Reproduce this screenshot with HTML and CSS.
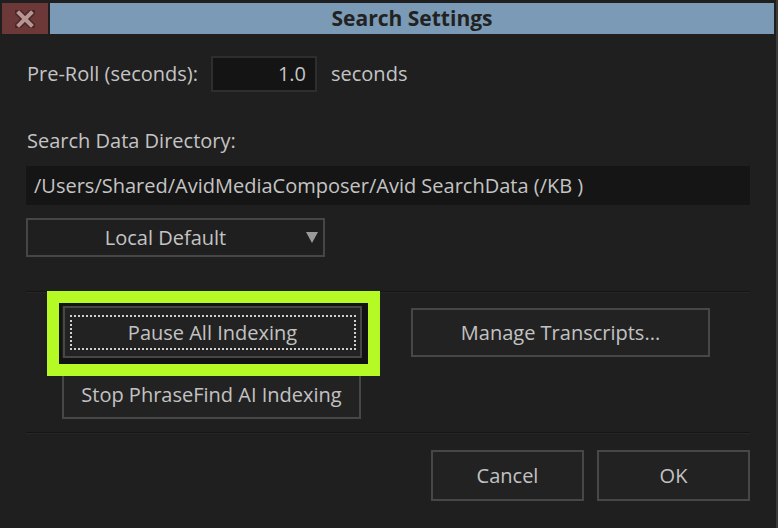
FILE: index.html
```html
<!DOCTYPE html>
<html lang="en">
<head>
  <meta charset="UTF-8">
  <title>Search Settings</title>
  <link rel="stylesheet" href="styles.css">
</head>
<body>
  <div class="dialog">
    <!-- Title bar -->
    <div class="titlebar">
      <div class="close-btn">
        <svg width="20" height="18" viewBox="0 0 20 18">
          <path d="M3 2 L17 16 M17 2 L3 16" stroke="#4a2626" stroke-width="7" stroke-linecap="square"/>
          <path d="M4 3 L16 15 M16 3 L4 15" stroke="#b79595" stroke-width="4" stroke-linecap="square"/>
        </svg>
      </div>
      <div class="title">Search Settings</div>
    </div>

    <div class="content">
      <div class="row preroll">
        <label class="label">Pre-Roll (seconds):</label>
        <div class="num-field">1.0</div>
        <span class="label unit">seconds</span>
      </div>

      <div class="label dir-label">Search Data Directory:</div>
      <div class="path-field">/Users/Shared/AvidMediaComposer/Avid SearchData (/KB )</div>
      <div class="dropdown">
        <span>Local Default</span>
        <span class="arrow"></span>
      </div>

      <div class="separator"></div>

      <div class="actions">
        <div class="col">
          <div class="focus-wrap">
            <button class="btn focused"><span class="focus-dots">Pause All Indexing</span></button>
          </div>
          <button class="btn stop">Stop PhraseFind AI Indexing</button>
        </div>
        <div class="col">
          <button class="btn manage">Manage Transcripts...</button>
        </div>
      </div>

      <div class="separator second"></div>

      <div class="footer">
        <button class="btn small">Cancel</button>
        <button class="btn small">OK</button>
      </div>
    </div>
  </div>
</body>
</html>
```

FILE: styles.css
```css
body {
  margin: 0;
  background-color: #1f1f1f;
  font-family: "Open Sans", "Noto Sans", sans-serif;
  color: #c4c4c4;
}
.dialog {
  width: 778px;
  height: 528px;
  box-sizing: border-box;
  border-right: 2px solid #3a3a3a;
  background-color: #1f1f1f;
  overflow: hidden;
}
.titlebar {
  display: flex;
  height: 31px;
  margin-top: 3px;
  padding-left: 2px;
  padding-right: 2px;
  gap: 2px;
}
.close-btn {
  width: 46px;
  background-color: #6c3838;
  display: flex;
  align-items: center;
  justify-content: center;
}
.title {
  flex: 1;
  background-color: #7b9ab6;
  color: #222222;
  font-weight: bold;
  font-size: 21px;
  text-align: center;
  line-height: 31px;
}
.content {
  padding: 0 26px 0 26px;
}
.label {
  font-size: 20px;
  line-height: 26px;
  color: #c4c4c4;
}
.row {
  display: flex;
  align-items: center;
  height: 36px;
}
.preroll {
  margin-top: 22px;
  padding-left: 1px;
}
.num-field {
  height: 32px;
  margin-left: 13px;
  border: 2px solid #2e2e2e;
  background-color: #141414;
  font-size: 20px;
  line-height: 32px;
  text-align: right;
  padding-right: 9px;
  width: 93px;
}
.unit {
  margin-left: 14px;
}
.dir-label {
  margin-top: 36px;
  padding-left: 1px;
}
.path-field {
  margin-top: 12px;
  height: 39px;
  line-height: 39px;
  background-color: #151515;
  padding-left: 8px;
  font-size: 20px;
}
.dropdown {
  margin-top: 13px;
  width: 299px;
  height: 39px;
  box-sizing: border-box;
  border: 2px solid #464646;
  padding-right: 20px;
  display: flex;
  align-items: center;
  justify-content: center;
  position: relative;
  font-size: 20px;
}
.arrow {
  position: absolute;
  right: 5px;
  top: 12px;
  border-left: 6px solid transparent;
  border-right: 6px solid transparent;
  border-top: 11px solid #9a9a9a;
}
.separator {
  margin-top: 34px;
  height: 1px;
  background-color: #151515;
  border-bottom: 1px solid #262626;
}
.actions {
  display: flex;
  gap: 49px;
  padding-left: 36px;
  margin-top: 13px;
}
.col {
  display: flex;
  flex-direction: column;
}
.btn {
  font-family: "Open Sans", "Noto Sans", sans-serif;
  font-size: 20px;
  color: #c2c2c2;
  background-color: #222222;
  border: 2px solid #474747;
  width: 299px;
  padding: 0;
  cursor: pointer;
}
.focus-wrap {
  position: relative;
}
.focus-wrap::before {
  content: "";
  position: absolute;
  top: -15px;
  left: -15px;
  right: -18px;
  bottom: -18px;
  border: 12px solid #b6fa25;
  pointer-events: none;
  z-index: 2;
}
.focus-wrap::after {
  content: "";
  position: absolute;
  top: -3px;
  left: -3px;
  right: -6px;
  bottom: -6px;
  border-style: solid;
  border-color: #121212;
  border-width: 3px 6px 6px 3px;
  pointer-events: none;
  z-index: 2;
}
.focused {
  height: 52px;
  display: flex;
  align-items: center;
  justify-content: center;
  margin-left: 1px;
}
.focus-dots {
  display: flex;
  align-items: center;
  justify-content: center;
  width: 282px;
  height: 31px;
  border: 2px dotted #d0d0d0;
}
.stop {
  height: 49px;
  margin-top: 12px;
}
.manage {
  height: 49px;
  margin-top: 2px;
}
.second {
  margin-top: 13px;
}
.footer {
  display: flex;
  justify-content: flex-end;
  gap: 13px;
  margin-top: 16px;
}
.footer .small {
  width: 153px;
  height: 51px;
}
```
